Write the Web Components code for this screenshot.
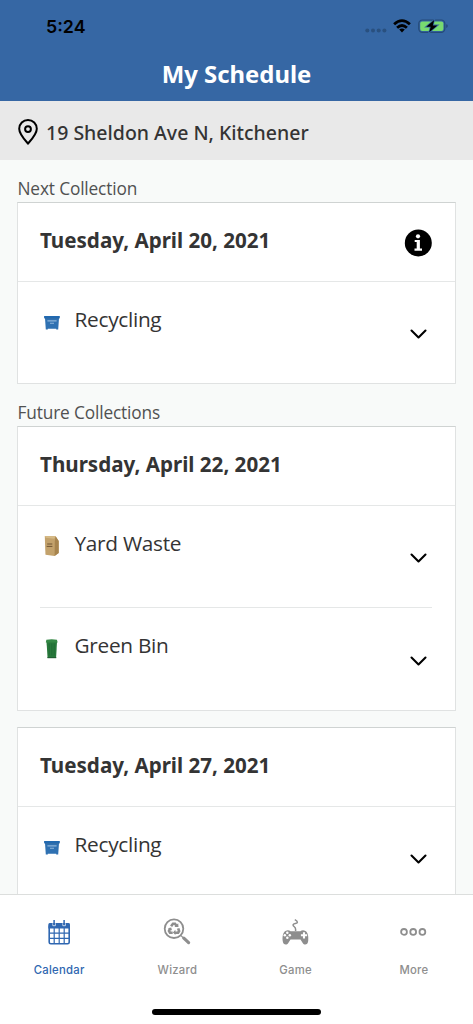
<!DOCTYPE html>
<html lang="en">
<head>
<meta charset="utf-8">
<title>My Schedule</title>
<style>
html,body{margin:0;height:100%;overflow:hidden}
body{font-family:"Open Sans","Noto Sans",sans-serif;color:#343434;background:#f8faf9}
</style>
</head>
<body>
<schedule-app></schedule-app>
<script>
const define = (name, html, setup) => customElements.define(name, class extends HTMLElement {
  connectedCallback() {
    if (this.shadowRoot) return;
    const root = this.attachShadow({mode: 'open'});
    root.innerHTML = html;
    if (setup) setup(this, root);
  }
});

define('status-bar', `
<style>
:host{display:flex;height:52px;box-sizing:border-box;padding:0 25px 0 46px;align-items:center;justify-content:space-between;font:600 17.8px/24px Inter,sans-serif;color:#000}
span{padding-top:1px}
svg{display:block}
</style>
<span>5:24</span>
<svg width="84" height="20" viewBox="364 16 84 20">
  <g fill="#29507f"><circle cx="367.3" cy="30.6" r="2"/><circle cx="373" cy="30.6" r="2"/><circle cx="378.7" cy="30.6" r="2"/><circle cx="384.4" cy="30.6" r="2"/></g>
  <g fill="none" stroke="#000" stroke-width="2.8"><path d="M394.1 24.3Q402 17 409.9 24.3"/><path d="M397.1 27.8Q402 23.3 406.9 27.8"/></g>
  <path d="M402 32.5L399.2 29.6Q402 27.3 404.8 29.6Z"/>
  <rect x="418.8" y="20" width="26" height="12.3" rx="3.6" fill="none" stroke="#254a78" stroke-width="1.2"/>
  <path d="M446.2 24.2Q448 24.4 447.8 26.1Q447.8 27.7 446.2 28Z" fill="#254a78"/>
  <rect x="420.2" y="21.5" width="23.2" height="9.4" rx="2" fill="#78db70"/>
  <path d="M434.2 20L426.3 26.8H430.7L429.2 32.2L437.4 25.4H432.8Z" fill="#000" stroke="#3667a4" stroke-width="1.6" paint-order="stroke"/>
</svg>`);

define('app-header', `
<style>
:host{display:block;height:101px;background:#3667a4;box-sizing:border-box}
h1{margin:0;text-align:center;color:#fff;font:700 23.9px/44px "Noto Sans",sans-serif}
</style>
<status-bar></status-bar><h1><slot></slot></h1>`);

define('address-bar', `
<style>
:host{display:flex;height:59px;background:#e9e9e9;align-items:center;padding:0 17px;gap:7px;font:500 19.5px/26px "Noto Sans",sans-serif}
svg{display:block;margin-top:2px;flex:none}
span{padding-top:5px}
</style>
<svg width="22" height="28" viewBox="0 0 22 28" fill="none" stroke="#000" stroke-width="2"><path d="M11 25.5C8 22 2.2 16.1 2.2 10.7a8.8 8.8 0 0 1 17.6 0C19.8 16.1 14 22 11 25.5Z"/><circle cx="11" cy="11.1" r="2.9"/></svg>
<span><slot></slot></span>`);

define('section-label', `
<style>:host{display:block;height:26px;padding:0 0 0 .5px;box-sizing:border-box;font-size:17.3px;letter-spacing:-.15px;line-height:26px;color:#505151;white-space:nowrap}</style>
<slot></slot>`);

define('info-badge', `
<style>:host{display:block;width:28px;height:28px}svg{display:block}</style>
<svg width="28" height="28" viewBox="0 0 28 28"><circle cx="14.3" cy="14" r="13.5"/><g fill="#fff"><circle cx="14" cy="7.3" r="2.1"/><path d="M10.7 11H15.9V19.6H18V21.8H10.5V19.6H12.7V13.1H10.7Z"/></g></svg>`);

define('collection-card', `
<style>
:host{display:block;background:#fff;border:1px solid #e0e2e2;border-top-color:#cfd3d2;box-sizing:border-box}
header{height:79px;box-sizing:border-box;padding:0 23px 1px 22px;border-bottom:1px solid #e5e7e7;display:flex;align-items:center;justify-content:space-between}
h2{margin:0 0 4px;font:700 20.6px/28px "Noto Sans",sans-serif;white-space:nowrap}
info-badge{margin-top:2px}
</style>
<header><h2></h2></header><slot></slot>`, (el, root) => {
  root.querySelector('h2').textContent = el.getAttribute('date');
  if (el.hasAttribute('info')) root.querySelector('header').append(document.createElement('info-badge'));
});

const bins = {
  recycling: `<path d="M4.1 6H19.8V8.4H4.1Z" fill="#2169b0"/><path d="M5 8.3H19L18.2 19.4H16.2V18.7H7.8V19.4H5.8Z" fill="#2f71b2"/><path d="M5 8.3H19V8.9H5Z" fill="#1e5c9a"/><path d="M7.4 10.9H16.6M10 13.2H14" stroke="#8fb5da" stroke-width="1.1"/>`,
  yard: `<g transform="translate(0 -1)"><path d="M4.8 3.1L15.6 3.2L18.7 8V20L14.6 22.9L5.5 21.8L5.2 16Z" fill="#c3a26c"/><path d="M15.6 3.2L18.7 8V20L14.6 22.9L14.8 8.5Z" fill="#a7844e"/><path d="M4.8 3.1L15.6 3.2L14.2 5.8L5.7 4.8Z" fill="#d6ba86"/><path d="M7.2 11H12.3M6.7 13.4H12.4" stroke="#705433" stroke-width="1"/></g>`,
  green: `<g transform="translate(0 -1.5)"><path d="M6.5 6.2H17L16.1 22.5H7.6Z" fill="#28793b"/><path d="M6.4 4.2Q11.7 3.1 16.9 4.2L17.7 6.9H5.8Z" fill="#348845"/><path d="M9.3 8V20M11.8 8V20M14.2 8V20" stroke="#1c6832" stroke-width=".7"/><path d="M7.5 21.5H16.2V22.7H7.5Z" fill="#205e31"/></g>`
};
define('collection-item', `
<style>
:host{display:grid;grid-template-columns:24px 1fr 20px;column-gap:10.5px;height:101px;margin:0 27px 0 22px;box-sizing:border-box;align-items:center}
.icon{display:block;width:24px;height:26px;margin-top:-19px}
.name{font-size:20.8px;letter-spacing:-.28px;line-height:28px;margin-top:-28px}
.chev{display:block;margin-top:3px}
:host([divided]){height:102px;border-bottom:1px solid #e5e7e7;margin-right:23px;padding-right:4px}
:host([tall]){height:102px}
</style>
<svg class="icon" viewBox="0 0 24 26"></svg><span class="name"><slot></slot></span>
<svg class="chev" width="20" height="12" viewBox="0 0 20 12" fill="none" stroke="#000" stroke-width="2.1" stroke-linecap="round" stroke-linejoin="round"><path d="M3.5 2.5L10.5 9.5L17.5 2.5"/></svg>`, (el, root) => {
  root.querySelector('.icon').innerHTML = bins[el.getAttribute('kind')];
});

const tabIcons = {
  calendar: `<rect x="5.2" y="7.6" width="20" height="19.2" rx="1.6" fill="none" stroke="#2f67b1" stroke-width="1.6"/><path d="M4.4 7.4Q4.4 6 6 6H24.4Q26 6 26 7.4V11.5H4.4Z" fill="#2f67b1"/><path d="M10.2 11V26.5M15.2 11V26.5M20.2 11V26.5M5 16.2H25.5M5 21.4H25.5" stroke="#2f67b1" stroke-width="1.2"/><path d="M8.8 6.2V8.7H11.4V6.2M18.8 6.2V8.7H21.4V6.2" fill="none" stroke="#fff" stroke-width=".7"/><path d="M10.1 3V8M20.1 3V8" stroke="#2f67b1" stroke-width="1.5"/>`,
  wizard: `<circle cx="12" cy="11.7" r="9.3" fill="none" stroke="#8e8e8e" stroke-width="1.8"/><path d="M21.8 21.1L26.6 25.6" stroke="#8e8e8e" stroke-width="3.2" stroke-linecap="round"/><path d="M18.7 18.4L22 21.5" stroke="#8e8e8e" stroke-width="1.1"/><g fill="none" stroke="#8e8e8e" stroke-width="2.6"><path d="M9.1 9.2L11 6.7H13L14.8 9.2"/><path d="M16.2 11.4L17.1 14L16.1 15.7H13"/><path d="M10.7 15.7H8L7 14L8.2 11.4"/></g><path d="M12.4 9.9L16.5 9.9L16.2 6.2ZM13.4 12.8L10.9 15.6L13.4 18ZM6 11.3L9.2 10.4L10 13.4Z" fill="#8e8e8e"/>`,
  game: `<path d="M15.6 14V12.3C15.6 9.4 12.7 9.6 13.1 7.8C13.5 6.2 17.5 7 17.4 5.2Q17.3 3.9 14.8 2.6" fill="none" stroke="#8e8e8e" stroke-width="1.5"/><path d="M6.7 13.4Q9.2 13 10.5 14.2H20.4Q21.8 13 24.2 13.4C28 14 28.7 19.3 28.2 24C27.9 27.7 24.5 28.8 22.7 26L20.5 22.4H10.5L8.3 26C6.5 28.8 3 27.7 2.7 24C2.2 19.3 3 14 6.7 13.4Z" fill="#8e8e8e"/><g fill="#fff"><circle cx="7.3" cy="15.8" r="1.25"/><circle cx="7.3" cy="20.8" r="1.25"/><circle cx="4.8" cy="18.3" r="1.25"/><circle cx="9.8" cy="18.3" r="1.25"/></g><path d="M24 15.2V21.4M20.9 18.3H27.1" stroke="#fff" stroke-width="2.1"/>`,
  more: `<g fill="none" stroke="#8e8e8e" stroke-width="1.8"><circle cx="6" cy="14.9" r="2.9"/><circle cx="15.2" cy="14.9" r="2.9"/><circle cx="24.4" cy="14.9" r="2.9"/></g>`
};
define('tab-item', `
<style>
:host{display:flex;flex-direction:column;align-items:center;flex:1;padding-top:22px;gap:14px;font:500 11.3px/16px Inter,sans-serif;letter-spacing:.25px;color:#8e8e8e}
:host([active]){color:#2f67b1}
svg{display:block}
</style>
<svg width="31" height="31" viewBox="0 0 31 31"></svg><span><slot></slot></span>`, (el, root) => {
  root.querySelector('svg').innerHTML = tabIcons[el.getAttribute('icon')];
});

define('tab-bar', `
<style>
:host{display:flex;flex-direction:column;align-items:center;height:130px;box-sizing:border-box;border-top:1px solid #dcdedd;background:#fff;flex:none}
nav{display:flex;width:100%;height:114px}
.home{width:169px;height:6px;border-radius:3px;background:#000}
</style>
<nav><slot></slot></nav><div class="home"></div>`);

define('schedule-app', `
<style>
:host{display:flex;flex-direction:column;height:1024px;width:473px;background:#f8faf9;overflow:hidden}
app-header,address-bar{flex:none}
main{flex:1;min-height:0;overflow:hidden;padding:16px 17px 0}
section + section{padding-top:16px}
collection-card + collection-card{margin-top:16px}
</style>
<app-header>My Schedule</app-header>
<address-bar>19 Sheldon Ave N, Kitchener</address-bar>
<main>
  <section>
    <section-label>Next Collection</section-label>
    <collection-card date="Tuesday, April 20, 2021" info><collection-item kind="recycling">Recycling</collection-item></collection-card>
  </section>
  <section>
    <section-label>Future Collections</section-label>
    <collection-card date="Thursday, April 22, 2021"><collection-item kind="yard" divided>Yard Waste</collection-item><collection-item kind="green" tall>Green Bin</collection-item></collection-card>
    <collection-card date="Tuesday, April 27, 2021"><collection-item kind="recycling">Recycling</collection-item></collection-card>
  </section>
</main>
<tab-bar><tab-item icon="calendar" active>Calendar</tab-item><tab-item icon="wizard">Wizard</tab-item><tab-item icon="game">Game</tab-item><tab-item icon="more">More</tab-item></tab-bar>`);
</script>
</body>
</html>
